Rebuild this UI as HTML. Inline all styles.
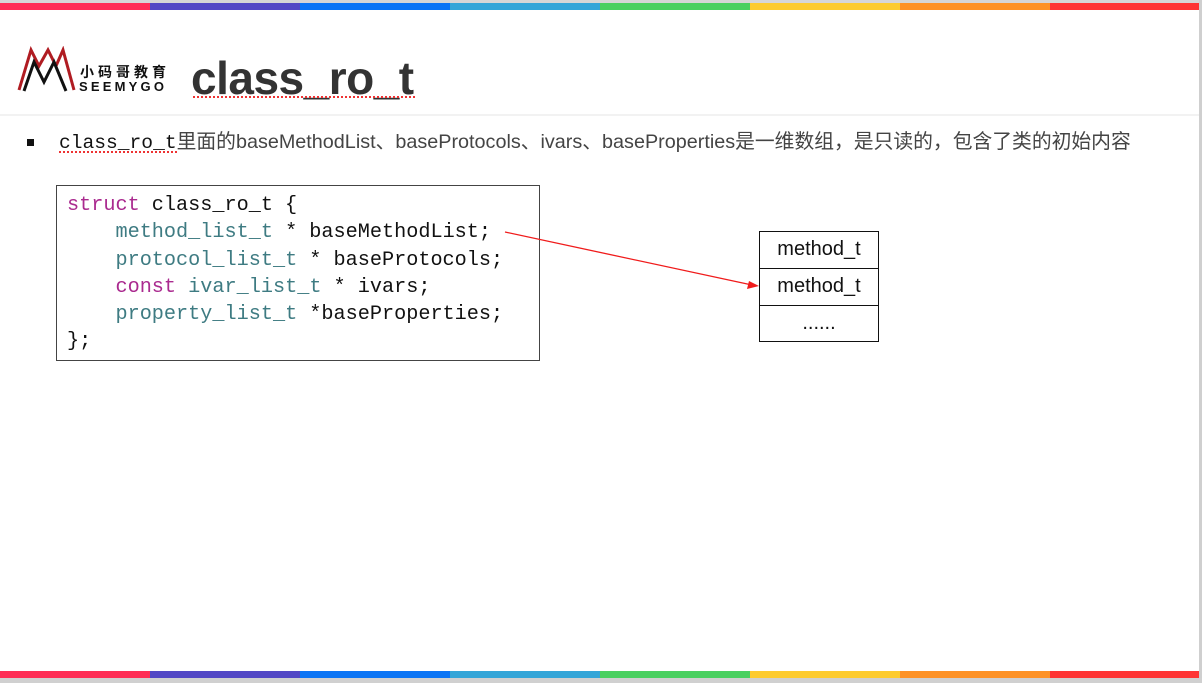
<!DOCTYPE html>
<html><head><meta charset="utf-8"><style>
body{margin:0;width:1202px;height:683px;background:#fff;position:relative;overflow:hidden;font-family:"Liberation Sans","Noto Sans CJK SC",sans-serif}
.bar{position:absolute;left:0;width:1199px;height:7px;display:flex}
.bar div{flex:0 0 150px;height:7px}
.mono{font-family:"Liberation Mono",monospace}
</style></head><body>
<div style="position:absolute;left:0;top:0;width:1202px;height:3px;background:#d6d6d6"></div>
<div style="position:absolute;right:0;top:0;width:3px;height:683px;background:#cfcfcf"></div>
<div style="position:absolute;left:0;bottom:0;width:1202px;height:5px;background:#d0d0d0"></div>
<div class="bar" style="top:3px"><div style="background:#ff2d55"></div><div style="background:#5247c5"></div><div style="background:#0a74f5"></div><div style="background:#33a5d8"></div><div style="background:#4ad060"></div><div style="background:#fdcb2e"></div><div style="background:#fe9226"></div><div style="background:#ff3434;flex:0 0 149px"></div></div>
<div class="bar" style="top:671px"><div style="background:#ff2d55"></div><div style="background:#5247c5"></div><div style="background:#0a74f5"></div><div style="background:#33a5d8"></div><div style="background:#4ad060"></div><div style="background:#fdcb2e"></div><div style="background:#fe9226"></div><div style="background:#ff3434;flex:0 0 149px"></div></div>
<div style="position:absolute;left:0;top:114px;width:1199px;height:2px;background:#f2f2f2"></div>

<svg style="position:absolute;left:16px;top:46px" width="60" height="50" viewBox="0 0 60 50">
<polyline points="3,44 15,4 23,20 32,4 40,20 47,4 58,44" fill="none" stroke="#b01c22" stroke-width="3"/>
<polyline points="8,45 18,16 28,36 38,16 50,45" fill="none" stroke="#111" stroke-width="3"/>
</svg>
<div style="position:absolute;left:80px;top:62px;font-size:14px;letter-spacing:4px;color:#111;font-weight:bold;font-family:'Noto Sans CJK SC',sans-serif">小码哥教育</div>
<div style="position:absolute;left:79px;top:79px;font-size:13px;letter-spacing:3.2px;color:#111;font-weight:bold">SEEMYGO</div>
<div style="position:absolute;left:191px;top:52px;font-size:46px;font-weight:bold;color:#333;letter-spacing:-0.5px;line-height:52px">class_ro_t</div>
<div style="position:absolute;left:193px;top:96px;width:222px;border-top:2px dotted #e33"></div>

<div style="position:absolute;left:27px;top:139px;width:7px;height:7px;background:#111"></div>
<div style="position:absolute;left:59px;top:130px;font-size:19.8px;color:#444;white-space:nowrap;line-height:24px"><span class="mono" style="color:#111;font-size:19.6px">class_ro_t</span>里面的baseMethodList、baseProtocols、ivars、baseProperties是一维数组，是只读的，包含了类的初始内容</div>
<div style="position:absolute;left:59px;top:151px;width:118px;border-top:2px dotted #e33"></div>

<div class="mono" style="position:absolute;left:56px;top:185px;width:484px;height:176px;border:1px solid #444;box-sizing:border-box;padding:6px 0 0 10px;font-size:20.2px;line-height:27.3px;white-space:pre;color:#111"><span style="color:#aa2a8f">struct</span> class_ro_t {
    <span style="color:#3e7b82">method_list_t</span> * baseMethodList;
    <span style="color:#3e7b82">protocol_list_t</span> * baseProtocols;
    <span style="color:#aa2a8f">const</span> <span style="color:#3e7b82">ivar_list_t</span> * ivars;
    <span style="color:#3e7b82">property_list_t</span> *baseProperties;
};</div>

<div style="position:absolute;left:759px;top:231px;width:120px;border:1px solid #111;box-sizing:border-box;font-size:20px;color:#111;text-align:center">
<div style="height:36px;line-height:34px;border-bottom:1px solid #111">method_t</div>
<div style="height:36px;line-height:34px;border-bottom:1px solid #111">method_t</div>
<div style="height:35px;line-height:34px">......</div>
</div>
<svg style="position:absolute;left:0;top:0" width="1202" height="683">
<line x1="505" y1="232" x2="752" y2="285" stroke="#f01b1b" stroke-width="1.3"/>
<polygon points="759,286 749,281 747,289" fill="#f01b1b"/>
</svg>
</body></html>
